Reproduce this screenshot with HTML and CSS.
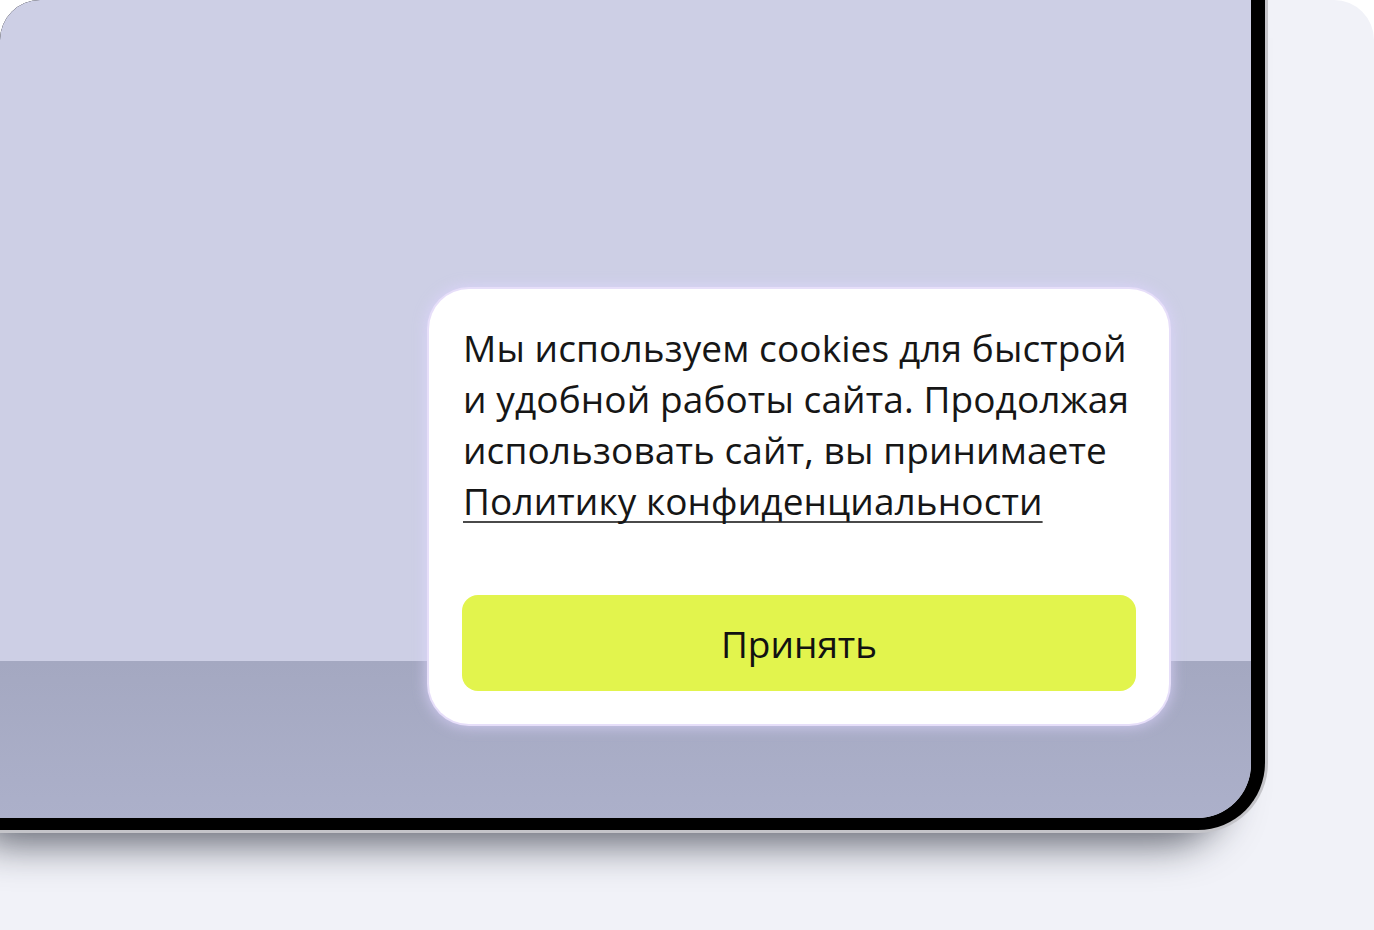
FILE: index.html
```html
<!DOCTYPE html>
<html lang="ru">
<head>
<meta charset="utf-8">
<title>Cookies</title>
<link rel="stylesheet" href="styles.css">
</head>
<body>
<div class="panel">
  <div class="device">
    <div class="bezel">
      <div class="screen">
        <div class="screen-body"></div>
        <div class="screen-band"></div>
        <div class="cookie-card">
          <p class="cookie-text">Мы используем cookies для быстрой и&nbsp;удобной работы сайта. Продолжая использовать сайт, вы принимаете <a class="cookie-link" href="#">Политику конфиденциальности</a></p>
          <button class="cookie-accept" type="button">Принять</button>
        </div>
      </div>
    </div>
  </div>
</div>
</body>
</html>
```

FILE: styles.css
```css
html, body {
  margin: 0;
  width: 100%;
  height: 100%;
  overflow: hidden;
  background: #ffffff;
}

.panel {
  width: 1374px;
  height: 930px;
  background: #f1f2f8;
  border-radius: 40px 40px 0 0;
  overflow: hidden;
}

/* silver rim around the black bezel; the shadow falls only below it */
.device {
  width: 1268px;
  height: 833px;
  box-sizing: border-box;
  padding: 0 3px 3px 0;
  background: #c4c4c9;
  border-radius: 0 0 70px 0;
  box-shadow: -30px 24px 40px -14px rgba(30, 34, 48, 0.7);
}

.bezel {
  height: 100%;
  box-sizing: border-box;
  padding: 0 14px 12px 0;
  background: #000000;
  border-radius: 0 0 67px 0;
}

.screen {
  position: relative;
  height: 100%;
  display: flex;
  flex-direction: column;
  background: #cdcfe5;
  border-radius: 0 0 54px 0;
  overflow: hidden;
}

.screen-body {
  flex: 1;
}

.screen-band {
  height: 157px;
  background: linear-gradient(180deg, #a4a8c1 0%, #acb0ca 100%);
}

/* cookie consent popup floating over the page */
.cookie-card {
  position: absolute;
  left: 429px;
  top: 289px;
  width: 740px;
  box-sizing: border-box;
  padding: 33px;
  background: #ffffff;
  border-radius: 40px;
  box-shadow: 0 0 0 2px #e6def9, 0 0 14px 3px rgba(222, 212, 255, 0.75);
  display: flex;
  flex-direction: column;
  gap: 69px;
  font-family: "Open Sans", "Noto Sans", sans-serif;
}

.cookie-text {
  margin: 0;
  padding-left: 1px;
  font-size: 37px;
  line-height: 51px;
  letter-spacing: 0.1px;
  color: #161616;
}

.cookie-link {
  color: inherit;
  text-decoration: underline;
  text-decoration-thickness: 1.5px;
  text-underline-offset: 6px;
  text-decoration-color: #4a4a4a;
  text-decoration-skip-ink: none;
}

.cookie-accept {
  height: 96px;
  border: none;
  border-radius: 16px;
  background: #e2f44d;
  color: #111111;
  font-family: inherit;
  font-size: 37px;
  padding: 0;
}
```
